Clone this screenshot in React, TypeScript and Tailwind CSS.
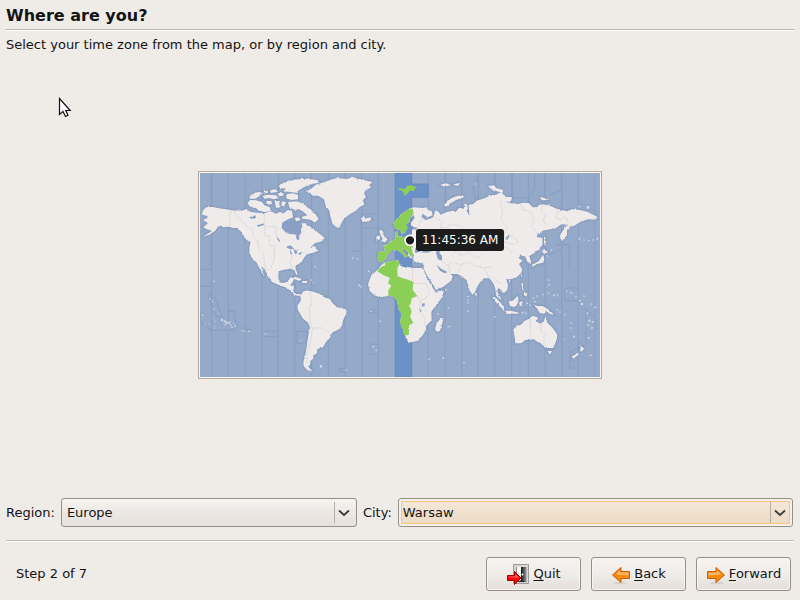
import { useState } from "react";
import type { ReactNode } from "react";

const LAND = [
  // North America
  "M20 128 30 118 50 117 70 121 100 125 118 128 128 124 138 129 148 124 165 132 185 134 205 136 225 130 240 137 252 131 262 137 275 126 288 128 291 148 272 158 260 164 257 178 272 194 298 198 304 216 310 212 309 203 316 192 314 182 319 176 316 166 330 166 340 176 352 180 358 190 372 198 386 210 378 220 356 226 345 238 358 234 360 242 368 248 352 254 336 258 325 268 317 282 302 292 298 300 305 318 301 321 295 306 280 302 262 306 248 310 247 332 254 344 266 344 276 338 284 328 296 328 290 342 282 352 294 354 292 369 300 378 314 378 312 384 298 382 288 374 274 360 250 352 228 342 218 326 208 308 196 294 200 312 206 326 198 316 190 300 182 284 166 268 160 254 160 236 164 224 152 216 142 204 134 190 122 180 112 180 98 176 80 178 76 173 66 176 58 188 40 200 18 207 44 192 48 188 32 184 22 178 36 165 20 156 34 150 34 144 18 140Z",
  // South America
  "M312 384 322 370 335 367 355 372 372 378 385 388 402 393 409 404 422 417 447 423 455 431 447 444 441 458 438 474 427 485 410 493 402 509 390 522 381 538 364 543 362 557 352 562 352 572 344 578 342 590 336 596 350 609 334 607 323 595 322 582 328 562 332 534 337 502 342 474 336 464 320 451 304 423 305 411 314 399 314 388Z",
  // Greenland
  "M328 70 345 62 360 50 385 42 402 36 422 30 452 33 472 28 492 34 512 38 530 42 519 52 526 58 510 66 504 76 510 87 500 97 505 110 492 116 480 128 459 140 444 152 435 168 430 180 420 177 410 168 405 152 402 140 400 128 389 114 384 94 368 84 348 82 342 74Z",
  // Arctic islands
  "M250 50 270 42 290 35 330 32 365 36 368 44 340 50 324 58 310 66 300 74 282 72 262 70 270 62 252 60Z",
  "M272 78 290 76 306 80 306 94 288 96 270 92Z",
  "M162 84 175 74 190 72 200 76 190 84 178 92 160 92Z",
  "M155 106 162 96 180 97 198 102 205 112 222 118 224 130 205 132 188 128 180 120 160 114Z",
  "M200 84 216 80 240 82 248 90 232 94 220 90 205 92Z",
  "M222 66 240 64 245 72 226 74Z M246 76 262 74 262 84 248 84Z M204 70 216 68 214 75 204 76Z",
  "M210 100 226 98 228 108 214 110Z",
  "M236 100 248 98 254 116 240 120Z",
  "M258 100 270 102 264 116 256 112Z",
  "M276 102 300 100 320 106 332 116 345 126 360 140 368 154 356 164 345 156 332 154 318 152 318 146 334 142 320 130 308 124 296 126 280 118Z",
  "M296 150 308 148 314 156 300 160Z",
  // Iceland, Great Britain and Ireland
  "M494 150 503 147 507 152 522 148 528 155 512 161 500 160Z",
  "M549 188 560 186 560 196 566 206 575 214 568 222 554 222 560 212 554 202Z",
  "M542 204 552 202 552 214 540 218Z",
  // Eurasia
  "M547 252 560 250 570 252 563 240 559 234 575 229 587 220 598 212 598 192 606 190 606 205 620 207 640 206 648 198 648 186 664 180 650 176 644 164 656 150 652 140 640 155 632 170 634 180 625 195 618 198 612 185 600 183 592 175 592 165 605 150 622 134 636 125 652 118 670 119 688 120 707 130 710 142 695 148 680 138 676 146 688 156 700 152 712 148 718 126 728 132 734 140 752 132 770 128 780 130 790 119 804 122 806 106 814 110 816 138 820 140 818 110 832 108 842 98 865 91 880 84 900 80 915 73 930 86 948 88 946 98 930 102 945 106 966 108 980 104 999 105 1010 118 1024 117 1036 108 1058 112 1082 122 1102 126 1112 130 1130 123 1152 126 1175 132 1205 147 1198 155 1176 154 1152 162 1138 172 1122 178 1113 186 1113 200 1098 220 1091 205 1099 190 1114 170 1096 168 1084 178 1064 184 1040 188 1025 200 1022 207 1039 210 1040 229 1029 246 1014 256 1000 264 1005 280 1004 288 994 285 988 266 974 262 968 270 980 278 969 288 979 304 976 314 964 326 944 334 930 334 936 350 934 366 924 376 914 368 909 360 903 366 908 380 918 396 908 390 900 378 897 360 893 348 880 331 864 331 850 346 842 360 837 373 829 380 820 366 812 336 806 332 800 326 784 318 762 318 750 310 736 302 722 290 732 308 746 316 756 312 770 324 766 338 742 356 720 366 710 348 694 324 684 304 680 286 664 284 650 278 654 260 647 252 650 266 645 272 636 262 638 252 618 240 622 250 635 264 628 270 622 260 605 246 588 248 576 258 568 274 552 282 545 276Z",
  // Africa
  "M564 285 577 280 607 277 610 288 630 300 634 296 650 300 677 300 684 306 686 314 698 338 712 362 720 374 744 368 737 390 718 414 706 432 707 456 690 474 690 486 680 502 667 518 637 524 632 511 622 491 612 461 617 441 607 421 604 401 597 388 577 384 552 388 534 382 520 366 516 348 526 322 544 306 550 298Z",
  // Madagascar
  "M738 448 741 458 732 488 724 492 717 484 722 464Z",
  // Novaya Zemlya and Severnaya Zemlya
  "M744 112 754 98 775 86 800 81 804 88 780 96 762 107 752 116Z",
  "M876 54 895 52 900 60 922 66 916 74 898 68 886 64Z",
  "M1030 88 1052 90 1060 96 1038 97Z",
  "M732 50 750 46 766 52 746 56Z M770 50 792 44 786 54Z",
  // Sakhalin, Japan, Taiwan
  "M1044 205 1050 212 1048 236 1044 226Z",
  "M1043 242 1056 252 1044 258 1040 252Z",
  "M1041 260 1045 272 1042 284 1022 288 1010 298 1008 290 1028 280Z",
  "M974 320 978 316 976 330Z M936 340 944 338 940 346Z M837 374 844 378 842 386 838 384Z",
  // Philippines and Indonesia
  "M976 346 982 344 980 360 988 370 978 364Z M984 374 994 376 992 386 984 382Z",
  "M888 386 900 390 914 404 924 418 924 426 910 414 896 398Z",
  "M924 428 944 428 970 434 962 438 930 434Z",
  "M938 400 950 398 964 384 968 392 966 404 958 418 942 414Z",
  "M970 402 984 400 976 408 984 418 974 412 972 422Z",
  "M1010 408 1024 414 1040 414 1060 426 1074 440 1062 438 1052 430 1044 438 1030 434 1024 422Z",
  // Australia and Tasmania
  "M952 486 956 478 978 468 986 458 1000 452 1008 444 1026 448 1022 460 1036 468 1044 460 1048 444 1056 466 1070 480 1084 500 1082 516 1072 540 1048 540 1034 526 1024 522 1014 514 988 516 976 526 958 526 956 508Z",
  "M1054 549 1068 549 1062 560Z",
  // New Zealand
  "M1150 528 1156 536 1166 540 1158 550 1152 550 1154 540Z",
  "M1150 550 1146 562 1132 572 1128 566 1140 558Z",
  // Caribbean
  "M282 332 298 326 318 334 310 338 296 334Z M318 340 334 338 332 346 318 344Z",
];

const ZONE_LAND = [
  "M547 252 562 250 571 252 564 240 560 235 575 230 588 220 598 212 600 205 622 207 640 206 647 216 650 230 646 240 650 252 648 266 643 266 638 252 618 240 622 250 635 264 628 270 622 260 605 246 588 248 576 258 568 274 552 282 545 276Z",
  "M592 175 592 165 605 150 622 134 636 125 650 122 653 136 640 155 632 170 634 180 625 195 618 198 612 185 600 183Z",
  "M598 192 606 190 607 205 598 208Z",
  "M544 310 552 299 568 292 566 285 577 280 607 277 610 290 604 300 605 324 618 330 640 336 652 346 650 366 664 384 647 391 642 416 647 431 642 446 652 464 640 471 638 504 624 500 616 476 612 461 617 441 607 421 604 401 597 388 577 384 577 366 586 354 576 344 582 330 560 320Z",
  "M607 60 617 62 627 63 634 53 644 52 660 56 656 65 640 68 636 76 626 80 620 70 610 66Z",
];

const LAKES = [
  // Hudson Bay
  "M286 150 300 164 314 162 318 176 314 184 316 194 309 204 308 216 303 214 298 200 272 196 257 180 259 164 272 156Z",
  "M160 148 178 142 180 150 166 152Z",
  "M182 172 206 166 202 172 186 176Z",
  "M243 206 252 218 250 222 243 212Z",
  "M270 236 284 232 294 242 284 244 274 240Z M284 244 288 260 282 256Z M294 244 306 248 300 260 294 252Z M306 256 320 252 312 262Z",
  "M658 240 694 240 704 252 690 254 670 252 656 254Z",
  "M724 240 734 244 730 254 738 264 738 278 726 274 720 254Z",
  "M678 408 686 404 686 414 678 416Z M670 420 676 432 672 434Z",
  "M930 210 940 198 938 210 928 216Z",
];

const BORDERS = [
  "M118 128V140L136 156 150 174 170 184V202L186 222 190 244 202 256 206 290 214 306",
  "M102 128V174 M205 136V176H240V204L248 214",
  "M206 176V204H220V232H236V264L230 288 220 308",
  "M284 244 288 270 282 286 290 300 288 306",
  "M342 370 346 400 340 420 342 456 348 480H380L400 494 406 500 M350 480 344 520 334 548 332 586",
  "M912 98 920 132 916 154 932 174 922 210 946 204 968 220 950 230 924 222",
  "M974 110 980 124 1006 130 1014 160 1006 174 1024 196",
  "M1040 108 1036 132 1048 142 1042 158 1050 170",
  "M1088 124 1080 150 1096 156 1106 146 1120 168",
  "M716 150 738 160 734 180 752 176 772 168 798 176 814 200",
  "M754 176 770 202 802 204 814 216 804 236",
  "M676 152 666 180 M700 200V238",
  "M740 282 756 292 770 282 794 290 816 282 838 294 866 300 890 296",
  "M766 262 782 250 798 262 820 254 840 270 862 258",
  "M868 248 884 236 906 248 930 238 948 252",
  "M756 292 762 316 M796 292 786 312 M866 302 876 324 890 330",
  "M650 346H690L700 370 690 390 676 396 672 412 M664 384 674 404V436L688 450 686 474",
  "M650 300V346 M620 330 624 350",
  "M1004 452V516 M1034 468V492H1044V534",
  "M896 330 908 346 918 344",
];

const SEA_ZONES = [
  "M12 304H46V15 M12 355H46V380H36 M36 388H56L80 446 62 446 46 410Z",
  "M12 432V462L46 486H118L126 470 116 456V430H97V486 M148 486H163V480H138",
  "M247 490H204V506H247 M302 490H334V526H302Z",
  "M448 15V60 M547 15V138L496 138V180H547V220 M496 190V250H470",
  "M547 434H520V426H547 M547 528H523V558H547 M430 602H450V612H430Z",
  "M849 15 832 60 838 96 M949 15V90H1000L1016 60V15",
  "M1046 15V84 M1096 15V66L1062 80 M1147 15V100L1196 130",
  "M896 15V68 M1147 340V398H1106V360H1147",
  "M1168 420 1200 454V486 M1170 420V530L1124 550 1120 600H1147",
  "M1100 240 1040 270V300 M1080 230H1120V306 M1147 230V306 M797 15V80 M749 15V98",
];

// Small islands: x, y, size
const ISLETS: [number, number, number][] = [
  [54, 340, 4], [41, 393, 4], [49, 400, 3], [54, 424, 4], [66, 436, 3], [20, 442, 4], [28, 468, 3], [40, 468, 3],
  [58, 460, 3], [78, 456, 6], [86, 460, 6], [92, 464, 6], [98, 466, 5], [102, 462, 4], [88, 470, 4], [104, 472, 4],
  [112, 466, 3], [118, 474, 4], [108, 478, 4], [96, 480, 3], [56, 480, 3], [138, 488, 4], [146, 490, 4], [158, 490, 4],
  [208, 498, 4], [268, 408, 3], [314, 518, 3], [346, 336, 4], [352, 344, 3], [375, 595, 7], [357, 296, 4],
  [470, 270, 4], [484, 272, 4], [490, 352, 5], [495, 356, 4], [518, 310, 4], [524, 430, 4], [553, 460, 4],
  [532, 536, 4], [541, 547, 4], [450, 606, 4], [699, 574, 4], [742, 570, 5], [804, 584, 4], [757, 421, 4],
  [727, 437, 4], [757, 476, 4], [764, 474, 3], [750, 366, 5], [816, 386, 4], [816, 396, 4], [816, 404, 4],
  [815, 430, 4], [896, 446, 4], [1012, 390, 4], [1016, 402, 5], [1022, 384, 4], [1040, 380, 4], [1058, 376, 4],
  [1058, 336, 4], [1060, 350, 4], [1054, 356, 3], [1074, 382, 5], [1084, 380, 4], [1086, 384, 3], [1112, 370, 4],
  [1126, 374, 5], [1140, 386, 4], [1152, 398, 5], [1158, 408, 6], [1164, 384, 4], [1186, 408, 4], [1198, 418, 5],
  [1174, 436, 5], [1180, 458, 6], [1190, 462, 5], [1176, 472, 5], [1188, 480, 5], [1178, 510, 5], [1134, 506, 5],
  [1126, 466, 4], [1124, 480, 4], [1104, 514, 3], [1184, 562, 5], [1084, 426, 4], [1092, 432, 4], [1106, 440, 4],
  [980, 434, 5], [990, 436, 4], [994, 406, 5], [1002, 412, 4], [1150, 212, 5], [1164, 216, 4], [1178, 218, 4],
  [1192, 216, 4], [1204, 212, 5], [838, 48, 4], [1150, 116, 4], [1176, 118, 8], [1066, 246, 4], [1054, 264, 4],
];

function WorldMap() {
  return (
    <svg viewBox="12 15 1200 612" className="block h-auto w-full" role="img" aria-label="Time zone map">
      <defs>
        <filter id="coast" x="0" y="0" width="100%" height="100%" colorInterpolationFilters="sRGB">
          <feTurbulence type="fractalNoise" baseFrequency="0.09" numOctaves="2" seed="4" />
          <feDisplacementMap in="SourceGraphic" scale="7" xChannelSelector="R" yChannelSelector="G" />
        </filter>
      </defs>
      <rect x="12" y="15" width="1200" height="612" fill="#95a9c9" />
      <g stroke="#899ec1" strokeWidth="3" fill="none">
        {Array.from({ length: 24 }, (_, i) => (
          <path key={i} d={`M${47 + i * 50} 15V627`} />
        ))}
        {SEA_ZONES.map((d) => (
          <path key={d} d={d} />
        ))}
      </g>
      <path d="M598 15H647V48H697V88H647V627H598Z" fill="#6c91c8" stroke="#6084bd" strokeWidth="2" />
      <g filter="url(#coast)">
        <g fill="#7f94b9" stroke="#7f94b9" strokeWidth="10" strokeLinejoin="round" opacity="0.3">
          {LAND.map((d) => (
            <path key={d} d={d} />
          ))}
        </g>
        <g fill="#7f94b9" stroke="#7f94b9" strokeWidth="4" strokeLinejoin="round" opacity="0.5">
          {LAND.map((d) => (
            <path key={d} d={d} />
          ))}
        </g>
        <g fill="#eeebea">
          {LAND.map((d) => (
            <path key={d} d={d} />
          ))}
        </g>
        <g fill="none" stroke="#dfdbda" strokeWidth="3">
          {BORDERS.map((d) => (
            <path key={d} d={d} />
          ))}
        </g>
        <g fill="#8ccf57">
          {ZONE_LAND.map((d) => (
            <path key={d} d={d} />
          ))}
        </g>
        <g fill="#8a9fc3">
          {LAKES.map((d) => (
            <path key={d} d={d} />
          ))}
        </g>
      </g>
      <g fill="#d5dae3">
        {ISLETS.map(([x, y, s]) => (
          <rect key={`${x}-${y}`} x={x - s / 2} y={y - s / 2} width={s} height={s} />
        ))}
      </g>
      <circle cx="642" cy="217" r="15" fill="#1c1c1c" stroke="#fff" strokeWidth="5" />
    </svg>
  );
}

function Rule() {
  return <hr className="h-[2px] border-t border-b border-t-[#bfb4a6] border-b-white" />;
}

type ComboProps = { id: string; value: string; options: string[]; onChange: (v: string) => void; active?: boolean };

function Combo({ id, value, options, onChange, active = false }: ComboProps) {
  return (
    <div
      className={
        "relative h-[29px] w-full rounded-[3px] border border-[#968f85] p-[2px] " +
        (active ? "bg-[#f4f1ed]" : "bg-linear-to-b from-[#f6f4f2] via-[#ece8e4] to-[#e6e0db]")
      }
    >
      <select
        id={id}
        value={value}
        onChange={(e) => onChange(e.target.value)}
        className={
          "block h-full w-full appearance-none leading-5 outline-none " +
          (active ? "border border-[#f9c47c] bg-linear-to-b from-[#f5e8d8] to-[#ecdbc5] px-px" : "bg-transparent px-[3px]")
        }
      >
        {options.map((o) => (
          <option key={o}>{o}</option>
        ))}
      </select>
      <span className="pointer-events-none absolute inset-y-[3px] right-[3px] flex w-[19px] items-center justify-center border-l border-[#b5aea5]">
        <svg viewBox="0 0 12 8" className="h-2 w-3" fill="none" stroke="#3c3a37" strokeWidth="1.7">
          <path d="M1 1.5 6 6 11 1.5" />
        </svg>
      </span>
    </div>
  );
}

function NavButton({ icon, mnemonic, rest }: { icon: ReactNode; mnemonic: string; rest: string }) {
  return (
    <button
      type="button"
      className="flex h-[34px] w-[95px] items-center justify-center gap-[3px] rounded-[3px] border border-[#968f85] bg-linear-to-b from-[#f6f4f2] via-[#efece9] to-[#e5dfda] shadow-[inset_0_0_0_1px_#f8f6f4]"
    >
      {icon}
      <span>
        <u className="underline underline-offset-2">{mnemonic}</u>
        {rest}
      </span>
    </button>
  );
}

function QuitIcon() {
  return (
    <svg viewBox="0 0 24 24" className="h-6 w-6">
      <defs>
        <linearGradient id="door">
          <stop offset="0" stopColor="#111" />
          <stop offset="1" stopColor="#999" />
        </linearGradient>
      </defs>
      <path d="M7.500 2.500h15v19h-15z" fill="#d6d6d6" stroke="#999" />
      <path d="M10 5h10v15H10z" fill="#222" />
      <path d="M10.500 5h5v13l-5 2z" fill="#f5f5f5" />
      <path d="M15 5 20.500 5v15.500L15 18z" fill="url(#door)" />
      <circle cx="16.500" cy="12.500" r="1" fill="#fff" />
      <path d="M1.500 13.500h7v-4l6.500 6.500-6.500 6.500v-4h-7z" fill="#f00" stroke="#a40000" strokeLinejoin="round" />
      <path d="M2.500 14.500h7v-2.500l3.500 3.500H2.500z" fill="#ff6a6a" />
    </svg>
  );
}

function ArrowIcon({ left = false }: { left?: boolean }) {
  return (
    <svg viewBox="0 0 20 20" className={left ? "mt-[3px] h-5 w-5 -scale-x-100" : "mt-[3px] h-5 w-5"}>
      <ellipse cx="11" cy="17" rx="7" ry="1.500" fill="#000" opacity="0.08" />
      <path d="M1.500 5.500h8.500v-4l8.500 7.500L10 16.500v-4H1.500z" fill="#f88a0c" stroke="#c65d08" strokeLinejoin="round" />
      <path d="M2.500 6.500h8.500V4l4 4.500-12.500 1z" fill="#fbb56c" />
    </svg>
  );
}

const CITIES: Record<string, string[]> = {
  Europe: ["Warsaw", "Berlin", "London", "Paris"],
  America: ["New York", "Chicago", "Toronto"],
  Asia: ["Tokyo", "Shanghai", "Delhi"],
};

export default function App() {
  const [region, setRegion] = useState("Europe");
  const [city, setCity] = useState("Warsaw");

  return (
    <main className="relative flex min-h-screen flex-col bg-[#efebe7] px-[6px] font-['DejaVu_Sans',sans-serif] text-[13px] leading-5 text-[#141414]">
      <h1 className="flex h-[29px] items-center pt-[2px] text-base font-bold">Where are you?</h1>
      <Rule />
      <p className="pt-1">Select your time zone from the map, or by region and city.</p>

      <section className="flex flex-1 items-center justify-center pb-1">
        <div className="relative w-full max-w-[404px] border border-[#b3a99c] bg-[#f8f5f1] p-px">
          <WorldMap />
          <output className="absolute top-[28%] left-[54%] flex h-[22px] items-center rounded-[3px] bg-[#1c1c1c] px-[6px] text-xs text-white">
            11:45:36 AM
          </output>
        </div>
      </section>

      <form className="flex items-center gap-[6px] pr-px pb-[13px]">
        <label htmlFor="region">Region:</label>
        <div className="w-[296px] shrink-0">
          <Combo
            id="region"
            value={region}
            options={Object.keys(CITIES)}
            onChange={(v) => {
              setRegion(v);
              setCity(CITIES[v][0]);
            }}
          />
        </div>
        <label htmlFor="city">City:</label>
        <div className="min-w-0 flex-1">
          <Combo id="city" value={city} options={CITIES[region]} onChange={setCity} active />
        </div>
      </form>

      <Rule />
      <footer className="flex items-center gap-[10px] pt-[15px] pr-[3px] pb-[9px] pl-[10px]">
        <span className="mr-auto">Step 2 of 7</span>
        <NavButton icon={<QuitIcon />} mnemonic="Q" rest="uit" />
        <NavButton icon={<ArrowIcon left />} mnemonic="B" rest="ack" />
        <NavButton icon={<ArrowIcon />} mnemonic="F" rest="orward" />
      </footer>

      <svg viewBox="0 0 14 22" className="pointer-events-none absolute top-[97px] left-[58px] h-[22px] w-[14px]">
        <path d="M1.500 1.500v16l3.500-3 2.500 5 2.500-1.200-2.300-4.800h4.500z" fill="#fff" stroke="#111" strokeWidth="1.200" />
      </svg>
    </main>
  );
}
